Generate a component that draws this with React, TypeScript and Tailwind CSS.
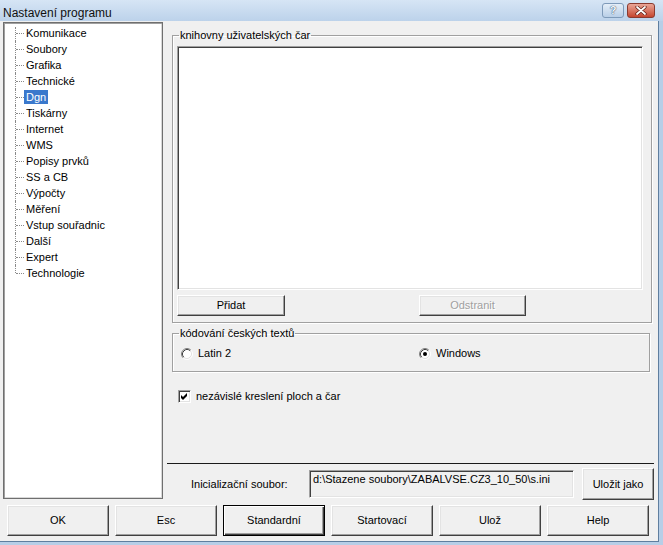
import React from "react";

const items = [
  "Komunikace",
  "Soubory",
  "Grafika",
  "Technické",
  "Dgn",
  "Tiskárny",
  "Internet",
  "WMS",
  "Popisy prvků",
  "SS a CB",
  "Výpočty",
  "Měření",
  "Vstup souřadnic",
  "Další",
  "Expert",
  "Technologie",
];

function Btn({
  children,
  className = "",
  isDefault = false,
  disabled = false,
}: {
  children: React.ReactNode;
  className?: string;
  isDefault?: boolean;
  disabled?: boolean;
}) {
  const bevel = isDefault
    ? "border border-black shadow-[inset_1px_1px_#ffffff,inset_-1px_-1px_#404040,inset_-2px_-2px_#a0a0a0]"
    : "border border-t-white border-l-white border-r-[#404040] border-b-[#404040] shadow-[inset_-1px_-1px_#a0a0a0,inset_1px_1px_#e3e3e3]";
  return (
    <div className={`flex items-center justify-center bg-[#f0f0f0] leading-[13px] ${bevel} ${className}`}>
      <span className={disabled ? "text-[#a0a0a0] [text-shadow:1px_1px_#ffffff]" : ""}>{children}</span>
    </div>
  );
}

function Radio({ checked }: { checked: boolean }) {
  return (
    <svg width="12" height="12" viewBox="0 0 12 12" className="shrink-0">
      <circle cx="6" cy="6" r="5" fill="#ffffff" />
      <path d="M2.11 9.89 A5.5 5.5 0 0 1 9.89 2.11" stroke="#808080" fill="none" />
      <path d="M9.89 2.11 A5.5 5.5 0 0 1 2.11 9.89" stroke="#ffffff" fill="none" />
      <path d="M2.82 9.18 A4.5 4.5 0 0 1 9.18 2.82" stroke="#404040" fill="none" />
      <path d="M9.18 2.82 A4.5 4.5 0 0 1 2.82 9.18" stroke="#e3e3e3" fill="none" />
      {checked && <circle cx="6" cy="6" r="2" fill="#000000" />}
    </svg>
  );
}

function Check() {
  return (
    <div className="w-[13px] h-[13px] shrink-0 bg-white border border-t-[#a0a0a0] border-l-[#a0a0a0] border-r-white border-b-white shadow-[inset_1px_1px_#404040,inset_-1px_-1px_#e3e3e3]">
      <svg width="11" height="11" viewBox="0 0 11 11" className="block">
        <polygon points="2,4 4,6 8,2 8,5 4,9 2,7" fill="#000000" transform="translate(0,0)" />
      </svg>
    </div>
  );
}

export default function App() {
  return (
    <div className="w-[663px] h-[545px] overflow-hidden bg-[#b7cee7] flex flex-col font-['Liberation_Sans',Arial,sans-serif] text-[11px] text-black">
      {/* title bar */}
      <div className="h-[21px] shrink-0 flex items-start bg-linear-to-b from-[#d6e5f5] to-[#bcd2ea]">
        <div className="pl-[3px] pt-[5px] text-[12px] leading-[16px] text-[#101010]">Nastavení programu</div>
        <div className="ml-auto mr-[8px] mt-[3px] flex gap-[3px]">
          <div className="w-[22px] h-[15px] rounded-[3px] border border-[#7e9ab9] bg-linear-to-b from-[#e4eef8] to-[#b9cfe7] flex items-center justify-center text-[11px] font-bold leading-[13px] text-[#f5f9fd] [text-shadow:0_0_1px_#2f4a6a,0_0_1px_#2f4a6a]">
            ?
          </div>
          <div className="w-[28px] h-[15px] rounded-[3px] border border-[#8a3b30] bg-linear-to-b from-[#e9a597] to-[#c5452f] flex items-center justify-center">
            <svg width="12" height="9" viewBox="0 0 12 9">
              <path d="M2 1 L10 8 M10 1 L2 8" stroke="#5a1a12" strokeWidth="3.2" strokeLinecap="round" />
              <path d="M2 1 L10 8 M10 1 L2 8" stroke="#ffffff" strokeWidth="1.8" strokeLinecap="round" />
            </svg>
          </div>
        </div>
      </div>

      {/* body */}
      <div className="flex-1 mr-[4px] mb-[3px] bg-[#f0f0f0] border-r border-b border-[#5f7e9f] flex flex-col">
        <div className="flex-1 flex">
          {/* tree */}
          <div className="ml-[3px] mt-[1px] w-[160px] h-[477px] bg-white border border-[#6f6f6f] shadow-[inset_1px_1px_#a0a0a0,inset_-1px_-1px_#d8d8d8] pt-[2px]">
            {items.map((it, i) => {
              const first = i === 0;
              const last = i === items.length - 1;
              const sel = it === "Dgn";
              return (
                <div key={it} className="h-[16px] flex items-center">
                  <div className="relative w-[20px] h-[16px] shrink-0">
                    <div
                      className={`absolute left-[11px] border-l border-dotted border-[#8a8a8a] ${
                        first ? "top-[2px] bottom-0" : last ? "top-0 h-[8px]" : "top-0 bottom-0"
                      }`}
                    />
                    <div className="absolute left-[12px] top-[8px] w-[8px] border-t border-dotted border-[#8a8a8a]" />
                  </div>
                  <span
                    className={`px-[2px] leading-[14px] whitespace-nowrap ${
                      sel ? "bg-[#3a78cc] text-white" : ""
                    }`}
                  >
                    {it}
                  </span>
                </div>
              );
            })}
          </div>

          {/* right pane */}
          <div className="flex-1 flex flex-col pt-[8px]">
            <fieldset className="ml-[9px] w-[480px] border border-[#a0a0a0] shadow-[inset_1px_1px_#ffffff,1px_1px_#ffffff] pb-[6px]">
              <legend className="ml-[6px] px-[1px] leading-[13px]">knihovny uživatelských čar</legend>
              <div className="ml-[4px] mt-[4px] w-[466px] h-[244px] bg-white border border-t-[#a0a0a0] border-l-[#a0a0a0] border-r-white border-b-white shadow-[inset_1px_1px_#404040,inset_-1px_-1px_#e3e3e3]" />
              <div className="flex mt-[5px] ml-[4px]">
                <Btn className="w-[108px] h-[21px]">Přidat</Btn>
                <Btn className="ml-[134px] w-[107px] h-[21px]" disabled>
                  Odstranit
                </Btn>
              </div>
            </fieldset>

            <fieldset className="ml-[9px] mt-[4px] w-[478px] border border-[#a0a0a0] shadow-[inset_1px_1px_#ffffff,1px_1px_#ffffff] pb-[11px]">
              <legend className="ml-[6px] px-[1px] leading-[13px]">kódování českých textů</legend>
              <div className="flex items-center h-[13px] mt-[7px]">
                <div className="flex items-center ml-[8px] w-[238px]">
                  <Radio checked={false} />
                  <span className="ml-[5px] leading-[13px]">Latin 2</span>
                </div>
                <div className="flex items-center">
                  <Radio checked={true} />
                  <span className="ml-[5px] leading-[13px]">Windows</span>
                </div>
              </div>
            </fieldset>

            <div className="flex items-center h-[13px] mt-[18px] ml-[15px]">
              <Check />
              <span className="ml-[5px] leading-[13px]">nezávislé kreslení ploch a čar</span>
            </div>

            <div className="flex-1" />
            <div className="h-px bg-[#1a1a1a] ml-[4px] mr-[4px]" />
            <div className="h-[37px] flex items-start">
              <div className="w-[146px] pl-[28px] mt-[14px] leading-[13px] whitespace-nowrap">Inicializační soubor:</div>
              <div className="mt-[6px] w-[265px] h-[28px] bg-[#f0f0f0] border border-t-[#a0a0a0] border-l-[#a0a0a0] border-r-white border-b-white shadow-[inset_1px_1px_#404040,inset_-1px_-1px_#e3e3e3] pl-[3px] pt-[2px] leading-[13px] whitespace-nowrap overflow-hidden">
                d:\Stazene soubory\ZABALVSE.CZ3_10_50\s.ini
              </div>
              <Btn className="ml-[8px] mt-[4px] w-[72px] h-[32px]">Uložit jako</Btn>
            </div>
          </div>
        </div>

        {/* bottom buttons */}
        <div className="flex gap-[6px] pl-[7px] mt-[4px] mb-[5px]">
          <Btn className="w-[102px] h-[31px]">OK</Btn>
          <Btn className="w-[102px] h-[31px]">Esc</Btn>
          <Btn className="w-[102px] h-[31px]" isDefault>
            Standardní
          </Btn>
          <Btn className="w-[102px] h-[31px]">Startovací</Btn>
          <Btn className="w-[102px] h-[31px]">Ulož</Btn>
          <Btn className="w-[102px] h-[31px]">Help</Btn>
        </div>
      </div>
    </div>
  );
}
